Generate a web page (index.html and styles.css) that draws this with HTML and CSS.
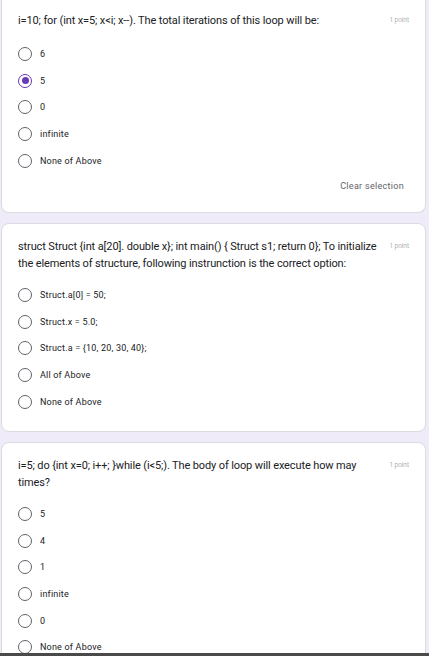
FILE: index.html
```html
<!DOCTYPE html>
<html>

	<head>
		<meta charset="UTF-8">
		<title>Quiz</title>
		<link rel="stylesheet" href="styles.css">
	</head>

	<body>
		<div class="form">
			<div class="card first">
				<div class="head">
					<div class="q">i=10; for (int x=5; x&lt;i; x--). The total iterations of this loop will be:</div>
					<div class="pts">1 point</div>
				</div>
				<ul class="opts">
					<li><span class="radio"></span>6</li>
					<li><span class="radio on"></span>5</li>
					<li><span class="radio"></span>0</li>
					<li><span class="radio"></span>infinite</li>
					<li><span class="radio"></span>None of Above</li>
				</ul>
				<div class="clear">Clear selection</div>
			</div>

			<div class="card">
				<div class="head">
					<div class="q">struct Struct {int a[20]. double x}; int main() { Struct s1; return 0}; To initialize the elements of structure, following instrunction is the correct option:</div>
					<div class="pts">1 point</div>
				</div>
				<ul class="opts">
					<li><span class="radio"></span>Struct.a[0] = 50;</li>
					<li><span class="radio"></span>Struct.x = 5.0;</li>
					<li><span class="radio"></span>Struct.a = {10, 20, 30, 40};</li>
					<li><span class="radio"></span>All of Above</li>
					<li><span class="radio"></span>None of Above</li>
				</ul>
			</div>

			<div class="card">
				<div class="head">
					<div class="q">i=5; do {int x=0; i++; }while (i&lt;5;). The body of loop will execute how may times?</div>
					<div class="pts">1 point</div>
				</div>
				<ul class="opts">
					<li><span class="radio"></span>5</li>
					<li><span class="radio"></span>4</li>
					<li><span class="radio"></span>1</li>
					<li><span class="radio"></span>infinite</li>
					<li><span class="radio"></span>0</li>
					<li><span class="radio"></span>None of Above</li>
				</ul>
			</div>
		</div>
		<div class="edge"></div>
	</body>

</html>
```

FILE: styles.css
```css
* {
	margin: 0;
	padding: 0;
	box-sizing: border-box;
}

body {
	background: #f0ebf8;
	font-family: Roboto, "Liberation Sans", sans-serif;
	color: #202124;
	overflow: hidden;
	height: 656px;
}

.form {
	padding: 0 3px 0 1px;
}

.card {
	background: #fff;
	border: 1px solid #dadce0;
	border-radius: 8px;
	padding: 14px 16px 16px 16px;
	margin-bottom: 10px;
}

.card.first {
	border-top: 0;
	border-radius: 0 0 8px 8px;
	padding-top: 12px;
	padding-bottom: 19px;
}

.head {
	display: flex;
	align-items: flex-start;
}

.q {
	flex: 1;
	font-size: 11px;
	line-height: 17px;
	letter-spacing: -0.12px;
	padding-right: 2px;
}

.pts {
	width: 24px;
	text-align: right;
	font-size: 6.5px;
	line-height: 17px;
	font-weight: 300;
	color: #80868b;
	white-space: nowrap;
}

.opts {
	list-style: none;
	margin-top: 10px;
}

.first .opts {
	margin-top: 12px;
}

.opts li {
	display: flex;
	align-items: center;
	height: 26.6px;
	font-size: 9px;
	letter-spacing: 0.2px;
	color: #202124;
}

.radio {
	width: 14px;
	height: 14px;
	border: 1.5px solid #5f6368;
	border-radius: 50%;
	margin-right: 8px;
	display: flex;
	align-items: center;
	justify-content: center;
}

.radio.on {
	border-color: #673ab7;
}

.radio.on:after {
	content: '';
	width: 7px;
	height: 7px;
	border-radius: 50%;
	background: #673ab7;
}

.clear {
	text-align: right;
	font-size: 9px;
	line-height: 13px;
	letter-spacing: 0.3px;
	color: #5f6368;
	margin-top: 6px;
	padding-right: 5px;
}

.edge {
	position: fixed;
	left: 0;
	right: 0;
	bottom: 0;
	height: 3px;
	background: #4a4a4a;
}
```
